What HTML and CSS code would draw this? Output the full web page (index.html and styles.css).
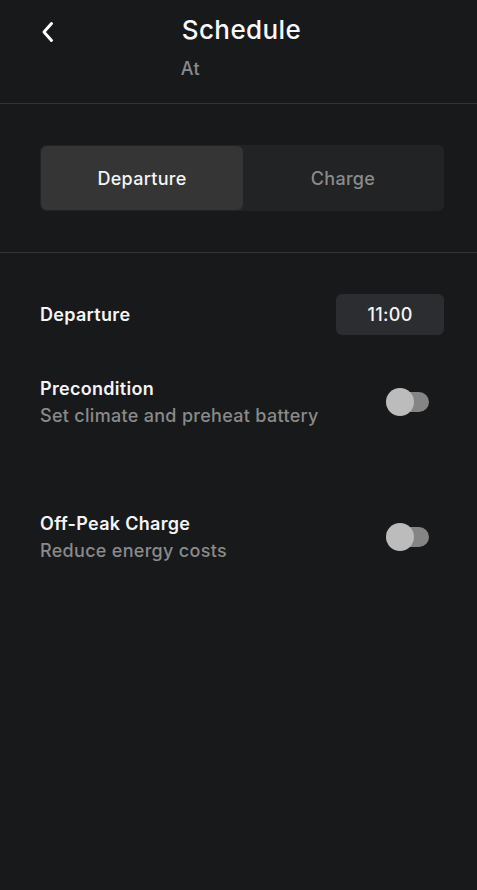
FILE: index.html
```html
<!DOCTYPE html>
<html>
<head>
<meta charset="utf-8">
<link rel="stylesheet" href="styles.css">
</head>
<body>
<div class="screen">
  <header class="header">
    <button class="back" aria-label="Back">
      <svg width="14" height="22" viewBox="0 0 14 22"><path d="M10.5 2.5 L3 11 L10.5 19.5" fill="none" stroke="#fff" stroke-width="3" stroke-linecap="round" stroke-linejoin="round"/></svg>
    </button>
    <div class="titles">
      <h1 class="title">Schedule</h1>
      <div class="subtitle">At</div>
    </div>
  </header>

  <section class="seg-section">
    <div class="segmented">
      <div class="seg active">Departure</div>
      <div class="seg">Charge</div>
    </div>
  </section>

  <section class="settings">
    <div class="row">
      <div class="label">Departure</div>
      <div class="time">11:00</div>
    </div>
    <div class="row item">
      <div class="texts">
        <div class="label">Precondition</div>
        <div class="desc">Set climate and preheat battery</div>
      </div>
      <div class="toggle"><span class="track"></span><span class="knob"></span></div>
    </div>
    <div class="row item item2">
      <div class="texts">
        <div class="label">Off-Peak Charge</div>
        <div class="desc">Reduce energy costs</div>
      </div>
      <div class="toggle"><span class="track"></span><span class="knob"></span></div>
    </div>
  </section>
</div>
</body>
</html>
```
FILE: styles.css
```css
* { box-sizing: border-box; }
html, body { margin: 0; padding: 0; }
body {
  background: #18191b;
  font-family: Inter, "Noto Sans", sans-serif;
  color: #f2f2f2;
  width: 477px;
  height: 890px;
  overflow: hidden;
}
.screen { display: flex; flex-direction: column; }

.header {
  height: 104px;
  border-bottom: 1px solid #333437;
  display: grid;
  grid-template-columns: 1fr auto 1fr;
  align-items: start;
}
.back {
  justify-self: start;
  background: none;
  border: 0;
  padding: 0;
  margin: 21px 0 0 41px;
  width: 14px;
  height: 22px;
  display: flex;
}
.titles {
  display: flex;
  flex-direction: column;
  align-items: flex-start;
  padding-top: 14px;
  margin-left: 6px;
}
.title {
  margin: 0;
  font-size: 26px;
  font-weight: 500;
  line-height: 32px;
  letter-spacing: 0.4px;
  color: #fafafa;
}
.subtitle {
  margin-top: 12px;
  margin-left: -1px;
  font-size: 18px;
  font-weight: 500;
  line-height: 22px;
  letter-spacing: 0.3px;
  color: #8a8a8c;
}

.seg-section {
  padding: 41px 33px 41px 40px;
  border-bottom: 1px solid #333437;
}
.segmented {
  height: 66px;
  background: #222325;
  border-radius: 6px;
  padding: 1px;
  display: grid;
  grid-template-columns: 202px 1fr;
}
.seg {
  display: flex;
  align-items: center;
  justify-content: center;
  font-size: 18px;
  font-weight: 500;
  letter-spacing: 0.3px;
  color: #8b8b8b;
  border-radius: 6px;
}
.seg.active {
  background: #353536;
  color: #f4f4f4;
}

.settings {
  padding: 41px 33px 0 40px;
  display: flex;
  flex-direction: column;
}
.row {
  display: flex;
  align-items: center;
  justify-content: space-between;
}
.label {
  font-size: 18px;
  font-weight: 600;
  line-height: 27px;
  letter-spacing: 0.3px;
  color: #f4f4f4;
}
.time {
  width: 108px;
  height: 41px;
  border-radius: 6px;
  background: #2c2d31;
  display: flex;
  align-items: center;
  justify-content: center;
  font-size: 18px;
  font-weight: 500;
  letter-spacing: 0.3px;
  color: #f4f4f4;
}
.item { margin-top: 40px; }
.item2 { margin-top: 81px; }
.desc {
  font-size: 18px;
  font-weight: 500;
  line-height: 27px;
  letter-spacing: 0.3px;
  color: #8a8a8a;
}
.toggle {
  position: relative;
  width: 43px;
  height: 28px;
  margin-right: 15px;
  margin-top: -1px;
}
.track {
  position: absolute;
  left: 8px;
  right: 0;
  top: 4px;
  height: 20px;
  border-radius: 10px;
  background: #858585;
}
.knob {
  position: absolute;
  left: 0;
  top: 0;
  width: 28px;
  height: 28px;
  border-radius: 50%;
  background: #bcbcbc;
}
```
